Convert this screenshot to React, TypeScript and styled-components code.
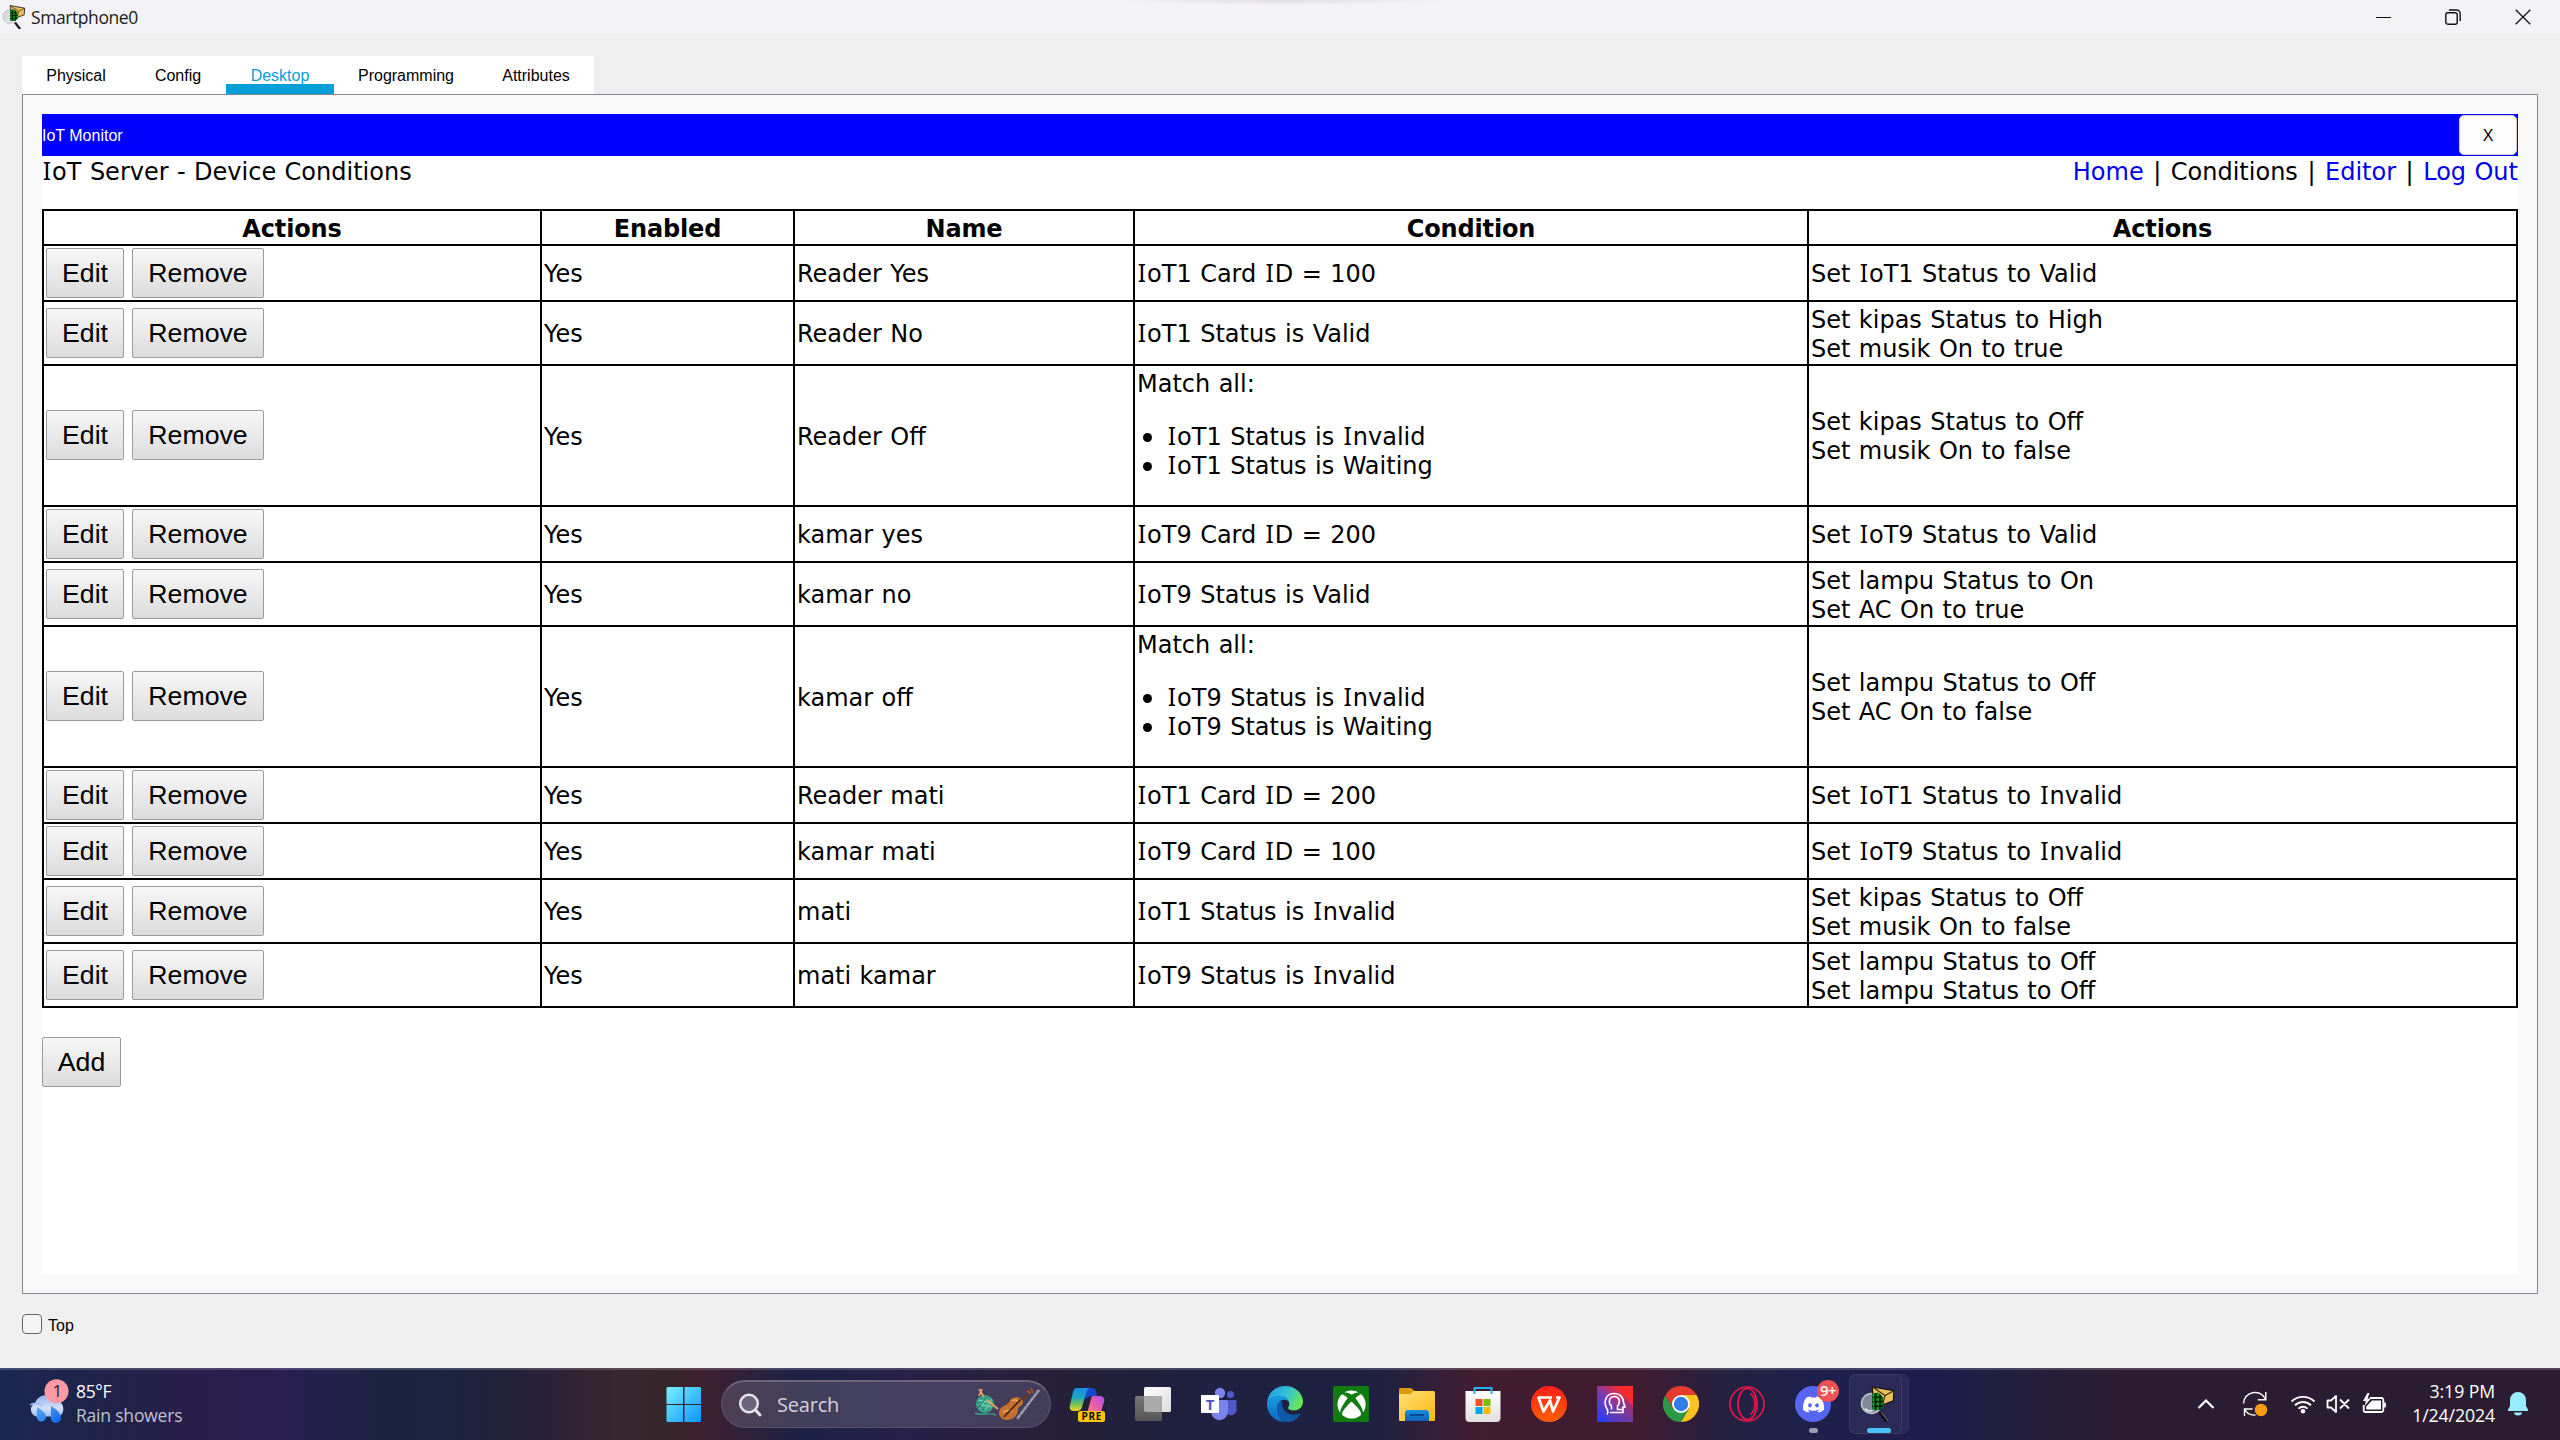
import React from 'react';
import styled, { createGlobalStyle } from 'styled-components';
import { FaDiscord, FaXbox } from 'react-icons/fa';

const GlobalStyle = createGlobalStyle`
  * { box-sizing: border-box; }
  html, body { margin: 0; padding: 0; background: #efefef; }
`;

const UI = '"Open Sans", "Noto Sans", sans-serif';
const ARIAL = '"Liberation Sans", Arial, sans-serif';
const VERDANA = '"DejaVu Sans", Verdana, sans-serif';

const Screen = styled.div`
  display: flex;
  flex-direction: column;
  width: 2560px;
  height: 1440px;
  overflow: hidden;
  background: #efefef;
  color: #000;
`;

/* ---------- window chrome ---------- */

const TitleBar = styled.header`
  display: flex;
  align-items: center;
  height: 34px;
  flex: none;
  padding: 0 29px 0 2px;
  background:
    radial-gradient(ellipse 172px 5px at 1282px 0, #e2dfe3 0, rgba(232, 229, 233, 0.7) 60%, transparent 100%),
    #f3f3f5;
`;

const WindowTitle = styled.h1`
  flex: 1;
  margin: 0 0 0 5px;
  font: 400 17.5px/34px ${UI};
  letter-spacing: -0.42px;
  color: #1b1b1b;
`;

const WindowButtons = styled.div`
  display: flex;
  align-items: center;
  gap: 54px;
  height: 34px;
  padding-bottom: 1px;
`;

const TabRow = styled.nav`
  display: flex;
  align-self: flex-start;
  flex: none;
  height: 38px;
  margin: 22px 0 0 22px;
  background: #fff;
`;

const Tab = styled.button<{ $width: number; $active?: boolean }>`
  width: ${(p) => p.$width}px;
  height: 38px;
  padding: 1px 0 0;
  border: 0;
  background: ${(p) => (p.$active ? 'linear-gradient(#fff 28px, #049fd9 28px)' : '#fff')};
  color: ${(p) => (p.$active ? '#049fd9' : '#000')};
  font: 16px/37px ${ARIAL};
  text-align: center;
  white-space: nowrap;
`;

const Panel = styled.main`
  flex: none;
  display: flex;
  width: 2516px;
  height: 1200px;
  margin-left: 22px;
  padding: 19px;
  border: 1px solid #828790;
  background: #f8f8f8;
`;

const Browser = styled.section`
  flex: 1;
  display: flex;
  flex-direction: column;
  background: #fff;
`;

const MonitorBar = styled.div`
  display: flex;
  align-items: center;
  justify-content: space-between;
  flex: none;
  height: 42px;
  padding: 0 1px 0 0;
  background: #0000ff;
  color: #fff;
  font: 16px/42px ${ARIAL};
`;

const MonitorTitle = styled.span`
  padding-top: 2px;
`;

const CloseApp = styled.button`
  width: 58px;
  height: 40px;
  padding: 2px 0 0;
  border: 1px solid #d0d0d0;
  border-radius: 5px;
  background: #fdfdfd;
  color: #000;
  font: 16px/36px ${ARIAL};
`;

const Footer = styled.footer`
  flex: 1;
  display: flex;
  align-items: flex-start;
  gap: 6px;
  padding: 20px 0 0 22px;
  font: 16px/23px ${ARIAL};
`;

const Checkbox = styled.span`
  width: 20px;
  height: 20px;
  border: 1px solid #626262;
  border-radius: 4px;
  background: #f5f5f5;
`;

/* ---------- page ---------- */

const PageHead = styled.div`
  display: flex;
  justify-content: space-between;
  flex: none;
  height: 53px;
  padding-top: 2px;
  font: 24px/29px ${VERDANA};
  word-spacing: 0.8px;
  white-space: pre;
`;

const NavLink = styled.a`
  color: #0000ee;
`;

const Pipe = styled.span`
  margin: 0 1.1px;
`;

const BarredI = styled.span`
  font-family: "Noto Sans", sans-serif;
  font-size: 24.5px;
  line-height: 0;
  letter-spacing: 1px;
  margin-left: 0.8px;
`;

const Table = styled.table`
  flex: none;
  width: 2476px;
  table-layout: fixed;
  border-collapse: collapse;
  font: 24px/29px ${VERDANA};
  word-spacing: 0.8px;
`;

const Col = styled.col<{ $width: number }>`
  width: ${(p) => p.$width}px;
`;

const HeadCell = styled.th`
  padding: 4px 2px 0;
  border: 2px solid #000;
  font-weight: 700;
  letter-spacing: -0.15px;
`;

const Cell = styled.td<{ $low?: boolean }>`
  padding: ${(p) => (p.$low ? '4px 2px 0' : '3px 2px 1px')};
  border: 2px solid #000;
  vertical-align: middle;
`;

const ButtonCell = styled.td<{ $tall: boolean }>`
  padding: ${(p) => (p.$tall ? '1px 2px 3px' : '2px')};
  border: 2px solid #000;
  vertical-align: middle;
`;

const ButtonPair = styled.div`
  display: flex;
  gap: 8px;
`;

const FormButton = styled.button<{ $width: number }>`
  width: ${(p) => p.$width}px;
  height: 50px;
  padding: 0;
  border: 1px solid #9b9b9b;
  border-radius: 2px;
  background: linear-gradient(#f7f7f7, #dcdcdc);
  color: #000;
  font: 26.67px/46px ${ARIAL};
  word-spacing: 0;
`;

const AddRow = styled.div`
  padding-top: 29px;
`;

const Matches = styled.ul`
  margin: 24px 0;
  padding: 0;
  list-style: none;
`;

const Match = styled.li`
  display: flex;
  align-items: center;
  height: 29px;
  padding-left: 6px;
  gap: 15px;
`;

const Bullet = styled.span`
  width: 9px;
  height: 9px;
  border-radius: 50%;
  background: #000;
`;

/* Verdana draws its capital I with serifs, so that letter takes its own face. */
const V = ({ children }: { children: string }) => (
  <span>
    {children.split(/(I)/).map((part, i) => (part === 'I' ? <BarredI key={i}>I</BarredI> : part))}
  </span>
);

type Rule = { name: string; condition: string | string[]; actions: string[] };

const rules: Rule[] = [
  { name: 'Reader Yes', condition: 'IoT1 Card ID = 100', actions: ['Set IoT1 Status to Valid'] },
  { name: 'Reader No', condition: 'IoT1 Status is Valid', actions: ['Set kipas Status to High', 'Set musik On to true'] },
  { name: 'Reader Off', condition: ['IoT1 Status is Invalid', 'IoT1 Status is Waiting'], actions: ['Set kipas Status to Off', 'Set musik On to false'] },
  { name: 'kamar yes', condition: 'IoT9 Card ID = 200', actions: ['Set IoT9 Status to Valid'] },
  { name: 'kamar no', condition: 'IoT9 Status is Valid', actions: ['Set lampu Status to On', 'Set AC On to true'] },
  { name: 'kamar off', condition: ['IoT9 Status is Invalid', 'IoT9 Status is Waiting'], actions: ['Set lampu Status to Off', 'Set AC On to false'] },
  { name: 'Reader mati', condition: 'IoT1 Card ID = 200', actions: ['Set IoT1 Status to Invalid'] },
  { name: 'kamar mati', condition: 'IoT9 Card ID = 100', actions: ['Set IoT9 Status to Invalid'] },
  { name: 'mati', condition: 'IoT1 Status is Invalid', actions: ['Set kipas Status to Off', 'Set musik On to false'] },
  { name: 'mati kamar', condition: 'IoT9 Status is Invalid', actions: ['Set lampu Status to Off', 'Set lampu Status to Off'] },
];

const RuleRow = ({ rule }: { rule: Rule }) => {
  const tall = Array.isArray(rule.condition);
  return (
    <tr>
      <ButtonCell $tall={tall}>
        <ButtonPair>
          <FormButton $width={78}>Edit</FormButton>
          <FormButton $width={132}>Remove</FormButton>
        </ButtonPair>
      </ButtonCell>
      <Cell $low={tall}>Yes</Cell>
      <Cell $low={tall}>{rule.name}</Cell>
      <Cell $low={tall}>
        {typeof rule.condition === 'string' ? (
          <V>{rule.condition}</V>
        ) : (
          <>
            Match all:
            <Matches>
              {rule.condition.map((c) => (
                <Match key={c}>
                  <Bullet />
                  <V>{c}</V>
                </Match>
              ))}
            </Matches>
          </>
        )}
      </Cell>
      <Cell $low={!tall && rule.actions.length > 1}>
        {rule.actions.map((a, i) => (
          <div key={i}>
            <V>{a}</V>
          </div>
        ))}
      </Cell>
    </tr>
  );
};

/* ---------- taskbar ---------- */

const Taskbar = styled.div`
  display: flex;
  flex: none;
  align-items: center;
  height: 72px;
  background:
    linear-gradient(rgba(255, 255, 255, 0.17) 2px, transparent 2px),
    linear-gradient(90deg, #1a2650 0, #1e2449 90px, #271f49 170px, #281e50 290px, #1c2342 380px, #1b2440 450px,
      #272038 530px, #38262f 620px, #35262b 670px, #40202e 700px, #2f2139 745px, #1c2145 800px, #272048 900px,
      #262037 1060px, #1f2140 1180px, #1f2142 1380px, #421c30 1475px, #401c30 1640px, #25203f 1720px,
      #1f214a 1800px, #1d1c4d 1930px, #1d2044 1980px, #251e3a 2040px, #2b1d31 2120px, #2b1d31 2560px);
`;

const Weather = styled.div`
  display: flex;
  align-items: center;
  gap: 7px;
  width: 651px;
  height: 72px;
  padding-left: 27px;
`;

const WeatherSymbol = styled.span`
  display: flex;
  padding-bottom: 6px;
`;

const WeatherText = styled.div`
  font: 17.5px/24px ${UI};
  color: #fff;
  letter-spacing: -0.35px;
  padding-bottom: 3px;
`;

const Muted = styled.div`
  color: #c0c1cf;
  letter-spacing: -0.2px;
`;

const Slot = styled.div`
  position: relative;
  display: flex;
  align-items: center;
  justify-content: center;
  width: 66px;
  height: 72px;
`;

const SearchBox = styled.div`
  display: flex;
  align-items: center;
  width: 330px;
  height: 48px;
  margin: 0 3px 0 4px;
  padding: 0 9px 0 16px;
  border: 1px solid #5a5270;
  border-top: 2px solid #6c647c;
  border-radius: 24px;
  background: linear-gradient(90deg, #4e3e52 0, #413f5c 80px, #453f62 200px, #423d59 100%);
`;

const SearchLabel = styled.span`
  flex: 1;
  margin-left: 15px;
  padding-top: 1px;
  font: 20px/44px ${UI};
  letter-spacing: -0.2px;
  color: #d2d0dc;
`;

const Mark = styled.span<{ $left: number; $width: number; $color: string }>`
  position: absolute;
  bottom: 7px;
  left: ${(p) => p.$left}px;
  width: ${(p) => p.$width}px;
  height: 5px;
  border-radius: 3px;
  background: ${(p) => p.$color};
`;

const CountBadge = styled.span`
  position: absolute;
  left: 37px;
  top: 12px;
  width: 22px;
  height: 22px;
  border-radius: 11px;
  background: #ef5356;
  color: #fff;
  font: 600 15px/20px ${UI};
  letter-spacing: -0.6px;
  text-align: center;
`;

const XboxTile = styled.div`
  display: flex;
  align-items: center;
  justify-content: center;
  width: 36px;
  height: 36px;
  border-radius: 2px;
  background: #107c10;
  color: #fff;
  font-size: 29px;
`;

const DiscordDisc = styled.div`
  display: flex;
  align-items: center;
  justify-content: center;
  width: 36px;
  height: 36px;
  border-radius: 18px;
  background: #5865f2;
  color: #fff;
  font-size: 23px;
`;

const ActiveStack = styled.div`
  width: 60px;
  height: 60px;
  border: 1px solid #34335c;
  border-radius: 7px;
  background: #28285a;
`;

const ActiveTile = styled.div`
  display: flex;
  align-items: center;
  justify-content: center;
  width: 53px;
  height: 60px;
  margin: -1px;
  padding-left: 5px;
  border: 1px solid #3d3c66;
  border-radius: 7px;
  background: #2c2b58;
`;

const Tray = styled.div`
  display: flex;
  align-items: center;
  flex: 1;
  justify-content: flex-end;
  padding-right: 32px;
`;

const TrayIcon = styled.span<{ $gap: number }>`
  display: flex;
  margin-right: ${(p) => p.$gap}px;
`;

const Clock = styled.div`
  width: 85px;
  margin-right: 13px;
  font: 17.7px/24px ${UI};
  letter-spacing: -0.1px;
  color: #fff;
  text-align: right;
  white-space: nowrap;
  padding-bottom: 2px;
`;

const PacketTracerIcon = ({ size }: { size: number }) => (
  <svg width={size} height={size} viewBox="0 0 36 36">
    <path d="M19.500 26l7.500 10" stroke="#111" strokeWidth="3.400" />
    <path d="M21 26l7 9" stroke="#777" strokeWidth="1" />
    <circle cx="11.500" cy="17.500" r="10" fill={size < 30 ? '#d9dbdc' : '#85889a'} stroke="#c0c3ca" strokeWidth="1.500" />
    <path d="M12.300.8L34 4.700l-.7 10L22.300 19 13 11z" fill="#ecc05f" stroke="#111" strokeWidth="1.200" />
    <path d="M12.300.8L25 9.500 34 4.700M25 9.500L22.500 19" fill="none" stroke="#3a2a08" strokeWidth="1.100" />
    <path d="M12 8l6-1.500 5 4.500 1 9-4 4-8-.5z" fill="#0b7a1c" />
    <path d="M12 11h10M12 15.500h12M12 20h11M15.500 7v17M20 8.500v15" stroke="#001c02" strokeWidth="1.500" />
    <path d="M13.500 9v15M18 8v15" stroke="#13c42c" strokeWidth="1" strokeDasharray="2.500 2" />
    <path d="M5 22.500c2 2.300 5 3 7.500 2" stroke="#fff" fill="none" strokeWidth="1.200" />
  </svg>
);

const WeatherIcon = () => (
  <svg width="42" height="46" viewBox="28 1376 42 46">
    <defs>
      <linearGradient id="cloud" x1="0" y1="0" x2="0" y2="1">
        <stop offset="0" stopColor="#8fb2f0" />
        <stop offset=".6" stopColor="#d3e0fa" />
        <stop offset="1" stopColor="#a5c0f2" />
      </linearGradient>
      <linearGradient id="drop" x1="0" y1="0" x2="1" y2="1">
        <stop offset="0" stopColor="#5db0ff" />
        <stop offset="1" stopColor="#0561ee" />
      </linearGradient>
    </defs>
    <path d="M37 1414.500a8 7.500 0 0 1-1-13.500 12 12 0 0 1 21-3 9 9 0 0 1 3 16.500z" fill="url(#cloud)" />
    <path d="M31 1403c4-3 9-2 12 1" stroke="#9db8ec" strokeWidth="1.500" fill="none" />
    <path d="M38 1405c5 3 9 6 9 10a4.600 4.600 0 0 1-9.200 0zM52 1404c5 3 10 7 10 12a5.100 5.100 0 0 1-10.200 0z" fill="url(#drop)" />
    <circle cx="57.500" cy="1389.300" r="12" fill="#ff99a4" />
    <text x="58.500" y="1395" textAnchor="middle" fontFamily="Open Sans" fontSize="16.500" fill="#1b1b1b">1</text>
  </svg>
);

const StartIcon = () => (
  <svg width="36" height="36" viewBox="0 0 36 36">
    <defs>
      <linearGradient id="win" x1="0" y1="0" x2="36" y2="36" gradientUnits="userSpaceOnUse">
        <stop offset="0" stopColor="#7df3ff" />
        <stop offset=".5" stopColor="#41c3ff" />
        <stop offset="1" stopColor="#0a94ff" />
      </linearGradient>
    </defs>
    <path fill="url(#win)" d="M1.500 1H17v17H.5V2zM18.500 1H34l1 1v16H18.500zM.5 19H17v17H1.500l-1-1zM18.500 19H35v16l-1 1H18.500z" />
  </svg>
);

const SearchIcon = () => (
  <svg width="24" height="24" viewBox="0 0 24 24" fill="none" stroke="#e6e3ea" strokeLinecap="round">
    <circle cx="11" cy="10.500" r="8.800" strokeWidth="2.500" fill="#6b6379" />
    <path d="M17.500 17l4.500 5" strokeWidth="3" />
  </svg>
);

const SearchArt = () => (
  <svg width="67" height="34" viewBox="0 0 67 34">
    <circle cx="11" cy="16" r="9" fill="#35a287" />
    <path d="M4 12l14 3M3 16l15 3M6 21L14 8M10 24l8-13" stroke="#8edbc0" strokeWidth=".9" />
    <path d="M4 20l10-12M2.500 14l9 10" stroke="#1d7763" strokeWidth="1" />
    <path d="M1 25c6 3 14-1 21 2" stroke="#35a287" strokeWidth="1.500" fill="none" />
    <path d="M5 1l5 8M8 1L5 8M13 12l11 9" stroke="#f0a060" strokeWidth="1.700" />
    <path d="M58 2L42 20" stroke="#6d3a1c" strokeWidth="2.200" />
    <path d="M53 3l4 2M57 0l2 5" stroke="#b5562a" strokeWidth="1.500" />
    <path d="M36 12c4-5 14-3 13 3-1 3-4 3-5 6 0 7-5 11-12 11-7-1-9-8-5-12 3-3 8-3 9-8z" fill="#c76f2d" />
    <path d="M38 13c2-2 7-1 6 2M29 24c2-1 6-2 9-1" stroke="#eea865" strokeWidth="1.500" fill="none" />
    <path d="M30 29L47 11" stroke="#3a2018" strokeWidth="1.600" />
    <path d="M65 2L43 31" stroke="#b9b6cc" strokeWidth="2.400" strokeDasharray="1.500 .5" />
  </svg>
);

const CopilotIcon = () => (
  <svg width="36" height="36" viewBox="0 0 36 36">
    <defs>
      <linearGradient id="cpA" x1="0" y1="0" x2="0" y2="1">
        <stop offset="0" stopColor="#1a8fe8" />
        <stop offset=".4" stopColor="#19a5c4" />
        <stop offset=".7" stopColor="#71c25a" />
        <stop offset="1" stopColor="#f3d420" />
      </linearGradient>
      <linearGradient id="cpB" x1="1" y1="0" x2="0" y2="1">
        <stop offset="0" stopColor="#b04ff0" />
        <stop offset=".5" stopColor="#ec5fa0" />
        <stop offset="1" stopColor="#ff9a5c" />
      </linearGradient>
    </defs>
    <path d="M13 2h10c2 0 3.500 1 4 3l1 5h-6l-6 3z" fill="#1548cf" />
    <path d="M8 2h14c-3 0-4 2-5 5l-4 14c-1 3-3 4-5 4H5c-4 0-5-3-4-6L4 6c.7-2.500 2-4 4-4z" fill="url(#cpA)" />
    <path d="M24 10h7c3.500 0 5 3 4 6l-3 10c-1 2.500-3 4-6 4H15c2-1 3-3 4-6l3-11c.4-1.700 1-3 2-3z" fill="url(#cpB)" />
    <rect x="9" y="25" width="27" height="11" rx="2.500" fill="#ffc60a" />
    <text x="22.800" y="34" textAnchor="middle" fontFamily="Open Sans" fontWeight="700" fontSize="10" letterSpacing=".7" fill="#111">PRE</text>
  </svg>
);

const TaskViewIcon = () => (
  <svg width="36" height="36" viewBox="0 0 36 36">
    <defs>
      <linearGradient id="tvA" x1="0" y1="0" x2="1" y2="1">
        <stop offset="0" stopColor="#fff" />
        <stop offset="1" stopColor="#dcdcdc" />
      </linearGradient>
      <linearGradient id="tvB" x1="0" y1="0" x2="0" y2="1">
        <stop offset="0" stopColor="#777" />
        <stop offset="1" stopColor="#555" />
      </linearGradient>
    </defs>
    <rect x="9" y="1" width="27" height="25" rx="1.500" fill="url(#tvA)" />
    <rect x="0" y="10" width="27" height="25" rx="1.500" fill="url(#tvB)" />
    <path d="M9 10h18v16H10.500L9 24.500z" fill="#aaa" />
  </svg>
);

const TeamsIcon = () => (
  <svg width="36" height="36" viewBox="0 0 36 36">
    <circle cx="29.500" cy="8.500" r="3.600" fill="#5059c9" />
    <path d="M26 14h8a1.500 1.500 0 0 1 1.500 1.500V24a5.500 5.500 0 0 1-9 4z" fill="#5059c9" />
    <circle cx="19" cy="7" r="5.200" fill="#7b83eb" />
    <path d="M12 14h13a2 2 0 0 1 2 2v9.500a8.500 8.500 0 0 1-16.500 3z" fill="#7b83eb" />
    <rect x="0" y="9" width="18" height="18" rx="1" fill="#fff" />
    <text x="9" y="23.500" textAnchor="middle" fontFamily="Open Sans" fontWeight="700" fontSize="15" fill="#4b53bc">T</text>
  </svg>
);

const EdgeIcon = () => (
  <svg width="36" height="36" viewBox="0 0 36 36">
    <defs>
      <linearGradient id="edA" x1="0" y1=".2" x2="1" y2=".6">
        <stop offset="0" stopColor="#1f9fe0" />
        <stop offset=".5" stopColor="#35c1d8" />
        <stop offset="1" stopColor="#6be84e" />
      </linearGradient>
      <linearGradient id="edB" x1="0" y1="0" x2="0" y2="1">
        <stop offset="0" stopColor="#1b9de2" />
        <stop offset="1" stopColor="#0a66c2" />
      </linearGradient>
    </defs>
    <path d="M0 17C1 6 9 0 18 0c11 0 18 8 18 15.500 0 5.500-4 9-9 9-4 0-6-1.500-6-2.500 0-.8 1.300-1.700 1.300-4 0-5-5-8-10.300-8C6 10 1.500 13 0 17z" fill="url(#edA)" />
    <path d="M0 17c1.500-4 6-7.500 12-7.500 5 0 9.500 2.500 10.300 7-1-1.500-3-2.700-5-2.700-4 0-7 3.500-7 8.200C10.300 30 15 36 21 36h-3C7 36-.5 27 0 17z" fill="url(#edB)" />
    <path d="M15 14.500c-3 1-5 4-5 7.500 0 8 5 14 12 14 4.500-.6 8.500-3.500 11-7.500.4-.7-.2-1.200-.8-.9-6 3-18 1-17.200-13.100z" fill="#1059a9" />
  </svg>
);

const ExplorerIcon = () => (
  <svg width="36" height="36" viewBox="0 0 36 36">
    <defs>
      <linearGradient id="fold" x1="0" y1="0" x2="1" y2="1">
        <stop offset="0" stopColor="#ffe07a" />
        <stop offset="1" stopColor="#ffb80d" />
      </linearGradient>
      <linearGradient id="foldB" x1="0" y1="0" x2="0" y2="1">
        <stop offset="0" stopColor="#1c8fe0" />
        <stop offset="1" stopColor="#0a62b5" />
      </linearGradient>
    </defs>
    <path d="M0 3.500A1.500 1.500 0 0 1 1.500 2H11c1 0 1.500.3 2 .8L15.500 5 12 8H0z" fill="#dd9c06" />
    <path d="M0 8h10c1.500 0 2-.5 3-1.500S14.500 5 16 5h18.500A1.500 1.500 0 0 1 36 6.500V34a1 1 0 0 1-1 1H1a1 1 0 0 1-1-1z" fill="url(#fold)" />
    <path d="M6 35v-8a3 3 0 0 1 3-3h18a3 3 0 0 1 3 3v8z" fill="url(#foldB)" />
    <path d="M11.500 29h13" stroke="#0a4a94" strokeWidth="1.800" strokeLinecap="round" />
  </svg>
);

const StoreIcon = () => (
  <svg width="36" height="36" viewBox="0 0 36 36">
    <defs>
      <linearGradient id="bag" x1="0" y1="0" x2="0" y2="1">
        <stop offset="0" stopColor="#fff" />
        <stop offset="1" stopColor="#dedede" />
      </linearGradient>
    </defs>
    <path d="M.5 5h35v27a4 4 0 0 1-4 4h-27a4 4 0 0 1-4-4z" fill="url(#bag)" />
    <path d="M9.500 8V2h17v6" fill="none" stroke="#21b4ef" strokeWidth="2" />
    <path d="M10.500 13h7v7h-7z" fill="#f25022" />
    <path d="M18.500 13h7v7h-7z" fill="#7fba00" />
    <path d="M10.500 21h7v7h-7z" fill="#00a4ef" />
    <path d="M18.500 21h7v7h-7z" fill="#ffb900" />
  </svg>
);

const WpsIcon = () => (
  <svg width="36" height="36" viewBox="0 0 36 36">
    <defs>
      <linearGradient id="wps" x1="0" y1="0" x2="0" y2="1">
        <stop offset="0" stopColor="#ff1f1a" />
        <stop offset="1" stopColor="#ff5f05" />
      </linearGradient>
    </defs>
    <circle cx="18" cy="18" r="18" fill="url(#wps)" />
    <path d="M21 11.500H7.500l5 14L19 14.500l3 11 6.500-14h-3.500" fill="none" stroke="#fff" strokeWidth="2.700" strokeLinejoin="round" />
    <path d="M13.500 16.500h5" stroke="#fff" strokeWidth="0" />
  </svg>
);

const HeadIcon = () => (
  <svg width="36" height="36" viewBox="0 0 36 36">
    <defs>
      <linearGradient id="head" x1="0" y1="1" x2="1" y2="0">
        <stop offset="0" stopColor="#1840ff" />
        <stop offset=".45" stopColor="#7a3ab5" />
        <stop offset=".8" stopColor="#ff2a2a" />
      </linearGradient>
    </defs>
    <path d="M0 0h36v36H0z" fill="url(#head)" />
    <path d="M9 28l7 8h20V20l-9-9z" fill="#5a3a9c" opacity=".45" />
    <g fill="none" stroke="#fff" strokeWidth="1.600">
      <path d="M10 28.500c1.500-2 1-4-.5-6.500C6 15 9.500 7.500 17 7.500c6 0 9.500 4 9.500 9l1.500 4.500h-2v5.500H13" />
      <path d="M14.500 23.500v-3.500c-4-4-2-9.500 2.800-9.500s7 5 3.200 9.500v3.500h5" />
    </g>
  </svg>
);

const ChromeIcon = () => (
  <svg width="36" height="36" viewBox="0 0 36 36">
    <path d="M2.410 9A18 18 0 0 1 33.590 9H18z" fill="#e33b2e" />
    <path d="M33.590 9A18 18 0 0 1 18 36l7.800-13.500L18 9z" fill="#fcc31e" />
    <path d="M2.410 9A18 18 0 0 0 18 36l7.800-13.500H10.200z" fill="#2c9a47" />
    <path d="M2.410 9L10.200 22.500 18 9z" fill="#e33b2e" />
    <circle cx="18" cy="18" r="9" fill="#fff" />
    <circle cx="18" cy="18" r="7.200" fill="#2f7de9" />
  </svg>
);

const OperaIcon = () => (
  <svg width="36" height="36" viewBox="0 0 36 36" fill="none" stroke="#e8174b" strokeWidth="1.700">
    <circle cx="18" cy="18" r="17" />
    <ellipse cx="18.500" cy="18" rx="9.500" ry="15.500" />
    <path d="M21.500 7.500c6 5 6 16 0 21" />
  </svg>
);

const ChevronIcon = () => (
  <svg width="18" height="12" viewBox="0 0 18 12" fill="none" stroke="#fff" strokeWidth="2.200">
    <path d="M1.500 10L9 2.500l7.500 7.500" />
  </svg>
);

const UpdateIcon = () => (
  <svg width="26" height="26" viewBox="0 0 26 26" fill="none" stroke="#fff" strokeWidth="1.400">
    <path d="M1.500 12.500A11.500 11 0 0 1 23.500 8M23.800 1v7.800h-8M2.500 25v-7h8M2.500 18c2.500 5 6 6.500 11 6" />
    <circle cx="19" cy="19" r="6.200" fill="#ff9b0f" stroke="none" />
  </svg>
);

const WifiIcon = () => (
  <svg width="26" height="20" viewBox="0 0 26 20" fill="none" stroke="#fff" strokeWidth="1.900">
    <path d="M1.500 7.500a16.500 16.500 0 0 1 23 0M5 11.200a11.500 11.500 0 0 1 16 0M8.500 14.600a6.500 6.500 0 0 1 9 0" />
    <circle cx="13" cy="17.200" r="2.200" fill="#fff" stroke="none" />
  </svg>
);

const MutedIcon = () => (
  <svg width="24" height="20" viewBox="0 0 24 20" fill="none" stroke="#fff" strokeWidth="1.800">
    <path d="M1.500 6.500H5l5-4.500v16l-5-4.500H1.500zM14 5.500l9 9M23 5.500l-9 9" strokeLinejoin="round" />
  </svg>
);

const BatteryIcon = () => (
  <svg width="25" height="22" viewBox="0 0 25 22">
    <path d="M8 5h11.500A1.800 1.800 0 0 1 21.300 7v10.200A1.800 1.800 0 0 1 19.500 19h-16a1.800 1.800 0 0 1-1.800-1.800V12" fill="none" stroke="#fff" strokeWidth="1.800" />
    <path d="M10 7.500h9v9H4.200V13.500z" fill="#fff" />
    <path d="M22 9.500h1.500q1.300 2.500 0 5H22zM5.500 0L1 8h3l-1.500 5L9 5.500H5.500L7.500 0z" fill="#fff" />
  </svg>
);

const BellIcon = () => (
  <svg width="20" height="24" viewBox="0 0 20 24" fill="#99ebff">
    <path d="M10 0a8 8 0 0 1 8 8v6l2 3.500V19H0v-1.500L2 14V8a8 8 0 0 1 8-8zM6 20.500h8a4 3 0 0 1-8 0z" />
  </svg>
);

const pinned: [string, React.ReactNode][] = [
  ['copilot', <CopilotIcon />],
  ['taskview', <TaskViewIcon />],
  ['teams', <TeamsIcon />],
  ['edge', <EdgeIcon />],
  ['xbox', <XboxTile><FaXbox /></XboxTile>],
  ['explorer', <ExplorerIcon />],
  ['store', <StoreIcon />],
  ['wps', <WpsIcon />],
  ['head', <HeadIcon />],
  ['chrome', <ChromeIcon />],
  ['opera', <OperaIcon />],
];

const tabs: [string, number][] = [
  ['Physical', 108],
  ['Config', 96],
  ['Desktop', 108],
  ['Programming', 144],
  ['Attributes', 116],
];

export default function App() {
  return (
    <Screen>
      <GlobalStyle />
      <TitleBar>
        <PacketTracerIcon size={24} />
        <WindowTitle>Smartphone0</WindowTitle>
        <WindowButtons>
          <svg width="16" height="16" viewBox="0 0 16 16" stroke="#111" strokeWidth="1">
            <path d="M1 8.500h15" />
          </svg>
          <svg width="16" height="16" viewBox="0 0 16 16" fill="none" stroke="#111" strokeWidth="1.400">
            <rect x=".8" y="3.800" width="11.400" height="11.400" rx="2" />
            <path d="M4 1h7.500A3.700 3.700 0 0 1 15.200 4.700V12" />
          </svg>
          <svg width="16" height="16" viewBox="0 0 16 16" stroke="#111" strokeWidth="1.300">
            <path d="M.7.700l14.600 14.600M15.300.7L.7 15.300" />
          </svg>
        </WindowButtons>
      </TitleBar>
      <TabRow>
        {tabs.map(([label, width]) => (
          <Tab key={label} $width={width} $active={label === 'Desktop'}>
            {label}
          </Tab>
        ))}
      </TabRow>
      <Panel>
        <Browser>
          <MonitorBar>
            <MonitorTitle>IoT Monitor</MonitorTitle>
            <CloseApp>X</CloseApp>
          </MonitorBar>
          <PageHead>
            <V>IoT Server - Device Conditions</V>
            <span>
              <NavLink>Home</NavLink> <Pipe>|</Pipe> Conditions <Pipe>|</Pipe> <NavLink>Editor</NavLink>{' '}
              <Pipe>|</Pipe> <NavLink>Log Out</NavLink>
            </span>
          </PageHead>
          <Table>
            <colgroup>
              {[498, 253, 340, 674, 709].map((w) => (
                <Col key={w} $width={w} />
              ))}
            </colgroup>
            <thead>
              <tr>
                {['Actions', 'Enabled', 'Name', 'Condition', 'Actions'].map((h, i) => (
                  <HeadCell key={i}>{h}</HeadCell>
                ))}
              </tr>
            </thead>
            <tbody>
              {rules.map((rule) => (
                <RuleRow key={rule.name} rule={rule} />
              ))}
            </tbody>
          </Table>
          <AddRow>
            <FormButton $width={79}>Add</FormButton>
          </AddRow>
        </Browser>
      </Panel>
      <Footer>
        <Checkbox />
        <span>Top</span>
      </Footer>
      <Taskbar>
        <Weather>
          <WeatherSymbol>
            <WeatherIcon />
          </WeatherSymbol>
          <WeatherText>
            85°F
            <Muted>Rain showers</Muted>
          </WeatherText>
        </Weather>
        <Slot>
          <StartIcon />
        </Slot>
        <SearchBox>
          <SearchIcon />
          <SearchLabel>Search</SearchLabel>
          <SearchArt />
        </SearchBox>
        {pinned.map(([id, icon]) => (
          <Slot key={id}>{icon}</Slot>
        ))}
        <Slot>
          <DiscordDisc>
            <FaDiscord />
          </DiscordDisc>
          <CountBadge>9+</CountBadge>
          <Mark $left={29} $width={9} $color="#9c9cb0" />
        </Slot>
        <Slot>
          <ActiveStack>
            <ActiveTile>
              <PacketTracerIcon size={36} />
            </ActiveTile>
          </ActiveStack>
          <Mark $left={21} $width={24} $color="#4cc2ff" />
        </Slot>
        <Tray>
          <TrayIcon $gap={27}><ChevronIcon /></TrayIcon>
          <TrayIcon $gap={22}><UpdateIcon /></TrayIcon>
          <TrayIcon $gap={10}><WifiIcon /></TrayIcon>
          <TrayIcon $gap={12}><MutedIcon /></TrayIcon>
          <TrayIcon $gap={23}><BatteryIcon /></TrayIcon>
          <Clock>
            3:19 PM
            <br />
            1/24/2024
          </Clock>
          <BellIcon />
        </Tray>
      </Taskbar>
    </Screen>
  );
}
